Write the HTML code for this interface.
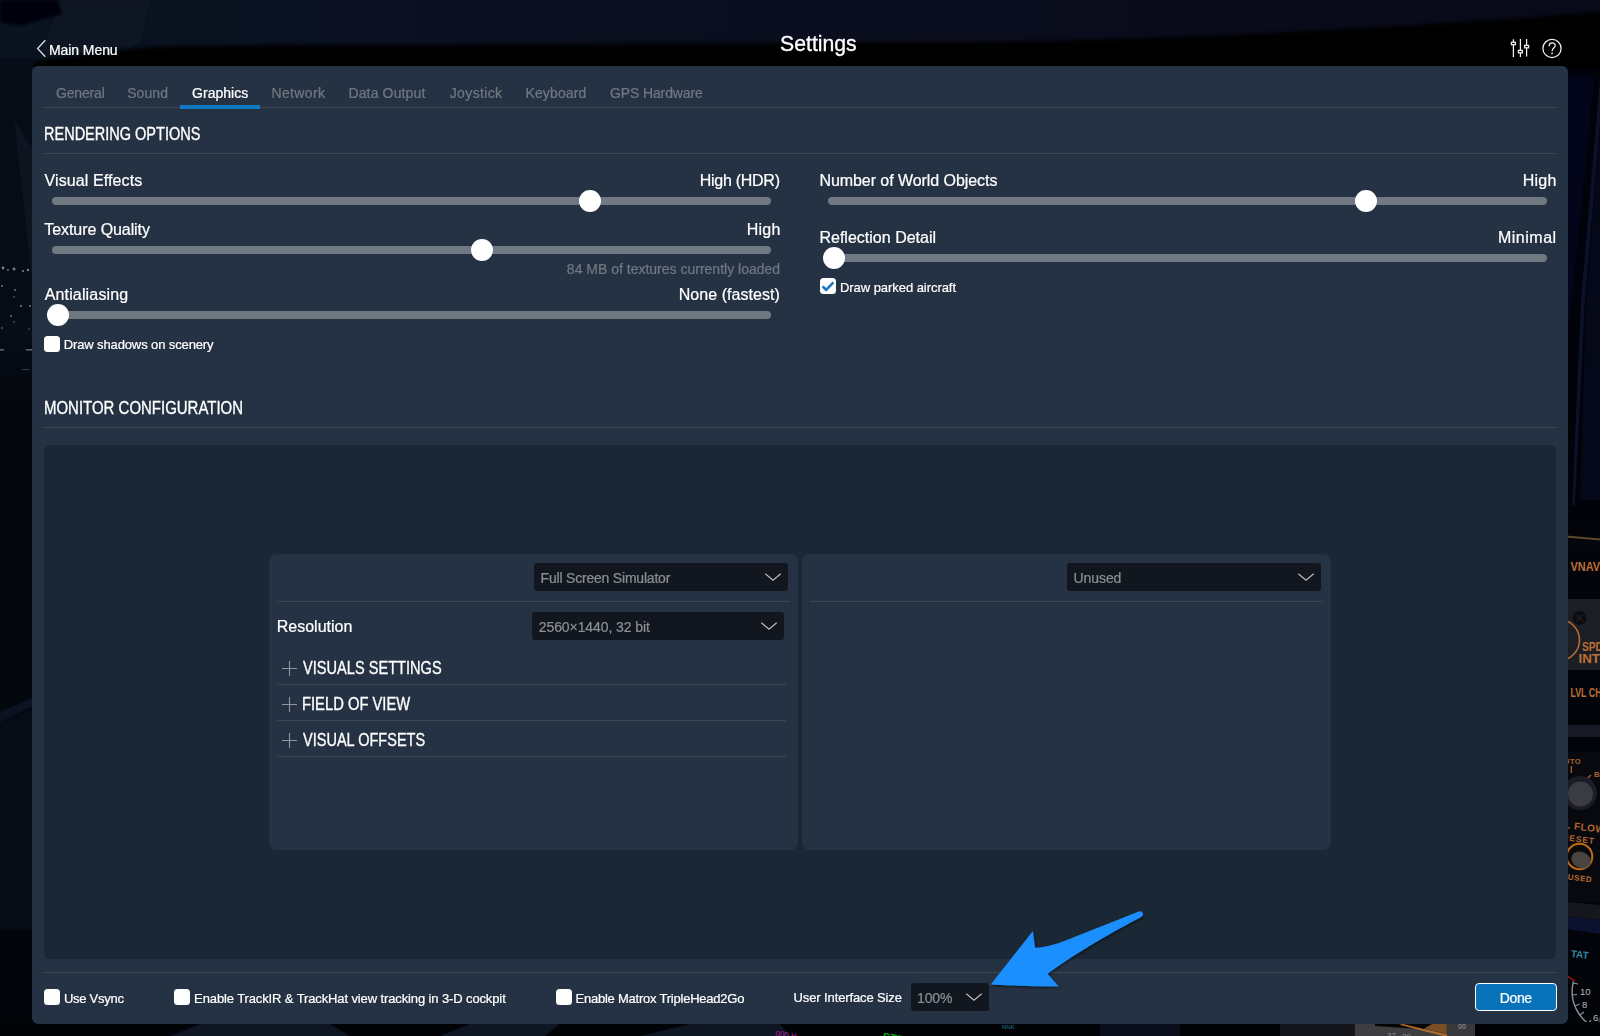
<!DOCTYPE html>
<html>
<head>
<meta charset="utf-8">
<title>Settings</title>
<style>
html,body{margin:0;padding:0;}
body{width:1600px;height:1036px;overflow:hidden;background:#03060d;font-family:"Liberation Sans",sans-serif;color:#fff;position:relative;}
.abs{position:absolute;}
.t{position:absolute;white-space:nowrap;line-height:1;-webkit-text-stroke:0.22px currentColor;}
.cond{transform-origin:0 0;-webkit-text-stroke:0.32px currentColor;}
#ui{position:absolute;left:0;top:0;width:1600px;height:1036px;will-change:transform;}
#bg{position:absolute;left:0;top:0;width:1600px;height:1036px;}
#panel{position:absolute;left:32px;top:66px;width:1536px;height:958px;background:#253243;border-radius:6px;}
.hl{position:absolute;height:1px;background:#3b4755;}
.tab{color:#707881;font-size:14px;}
.lbl{font-size:16px;color:#fff;}
.val{font-size:16px;color:#fff;text-align:right;}
.track{position:absolute;height:8px;border-radius:4px;background:#707881;}
.knob{position:absolute;width:22px;height:22px;border-radius:11px;background:#fff;}
.cb{position:absolute;width:16px;height:16px;border-radius:3.5px;background:#fff;}
.cbl{font-size:13px;color:#fff;}
.dd{position:absolute;background:#12161f;border-radius:3px;}
.ddt{font-size:14px;color:#8a8f96;}
.sec{font-size:17.5px;color:#fff;}
</style>
</head>
<body>
<svg id="bg" width="1600" height="1036" viewBox="0 0 1600 1036">
  <defs>
    <linearGradient id="lg-left" x1="0" y1="0" x2="0" y2="1">
      <stop offset="0" stop-color="#070d18"/><stop offset="0.3" stop-color="#060b15"/><stop offset="0.36" stop-color="#03060c"/><stop offset="1" stop-color="#04080f"/>
    </linearGradient>
    <linearGradient id="lg-right" x1="0" y1="0" x2="1" y2="0">
      <stop offset="0" stop-color="#04071a"/><stop offset="0.5" stop-color="#060a20"/><stop offset="1" stop-color="#02030c"/>
    </linearGradient>
    <linearGradient id="lg-top" x1="0" y1="0" x2="1" y2="0"><stop offset="0" stop-color="#0a1321"/><stop offset="0.3" stop-color="#0a1020"/><stop offset="0.65" stop-color="#090c1c"/><stop offset="1" stop-color="#080a19"/></linearGradient>
    <filter id="b3" x="-5%" y="-50%" width="110%" height="200%"><feGaussianBlur stdDeviation="2.2"/></filter>
    <filter id="b1"><feGaussianBlur stdDeviation="0.7"/></filter>
    <filter id="b2"><feGaussianBlur stdDeviation="1.6"/></filter>
  </defs>
  <rect x="0" y="0" width="1600" height="1036" fill="#03060d"/>
  <!-- top band: navy ceiling + black glareshield edge -->
  <rect x="0" y="0" width="1600" height="70" fill="url(#lg-top)"/>
  <path d="M60 0 L150 0 L140 42 L125 50 L40 58 Z" fill="#0b1422" filter="url(#b2)"/>
  <path d="M0 0 L58 0 L62 14 L20 26 L0 22 Z" fill="#020409" filter="url(#b2)"/>
  <path d="M-10 80 L-10 58 L30 62 L118 50 Q140 46 210 45.5 L1000 42 Q1320 35 1610 11 L1610 80 Z" fill="#000" filter="url(#b3)"/>
  <!-- left strip -->
  <rect x="0" y="58" width="34" height="978" fill="url(#lg-left)"/>
  <path d="M14 120 L34 150 L34 300 Z" fill="#0a1322" opacity="0.8" filter="url(#b1)"/>
  <g fill="#8d94a0" filter="url(#b1)" opacity="0.85">
    <circle cx="3" cy="268" r="1.4"/><circle cx="8" cy="270" r="0.9"/><circle cx="14" cy="269" r="1.5"/><circle cx="23" cy="271" r="1.1"/><circle cx="28" cy="270" r="1.2"/>
    <circle cx="2" cy="286" r="0.9"/><circle cx="15" cy="290" r="0.9"/><circle cx="14" cy="297" r="0.8"/><circle cx="21" cy="306" r="1"/><circle cx="30" cy="306" r="0.9"/>
    <circle cx="11" cy="316" r="0.9"/><circle cx="14" cy="322" r="0.8"/><circle cx="2" cy="328" r="1.2"/><circle cx="29" cy="329" r="1"/>
  </g>
  <rect x="0" y="324" width="32" height="20" fill="#0a111c" opacity="0.55"/>
  <g fill="#59606c" filter="url(#b1)"><rect x="0" y="349" width="4" height="1.6"/><rect x="26" y="349" width="6" height="1.6"/><rect x="22" y="369" width="8" height="1.2" opacity="0.5"/></g>
  <path d="M0 722 L34 708 L34 1036 L0 1036 Z" fill="#060b14"/>
  <path d="M0 712 L34 697 L34 705 L0 722 Z" fill="#0e1827" opacity="0.85" filter="url(#b1)"/>
  <rect x="0" y="930" width="34" height="106" fill="#020408" opacity="0.8"/>
  <!-- right strip: upper (window post) -->
  <rect x="1566" y="70" width="34" height="458" fill="#02030a"/>
  <path d="M1566 76 L1594.5 76 L1573 290 L1566 340 Z" fill="#03051b"/>
  <path d="M1600 76 L1604 76 L1585 300 L1575 505 L1572 505 L1581 300 Z" fill="#0a1430" opacity="0.75" filter="url(#b1)"/>
  <path d="M1602 100 L1602 500 L1580 500 L1586 300 Z" fill="#050819"/>
  <!-- right strip: cockpit panel -->
  <rect x="1566" y="520" width="34" height="516" fill="#030409"/>
  <path d="M1566 535.5 L1600 538.5 L1600 540.5 L1566 537.5 Z" fill="#5b4b2c"/>
  <rect x="1566" y="541" width="34" height="10" fill="#05070f"/>
  <rect x="1566" y="599" width="34" height="71" fill="#1c1e25"/>
  <rect x="1566" y="725" width="34" height="12" fill="#171924"/>
  <rect x="1566" y="752" width="34" height="150" fill="#07090f"/>
  <path d="M1566 902 L1600 905 L1600 920 L1566 916 Z" fill="#15171d"/>
  <path d="M1566 916 L1600 920 L1600 934 L1566 929 Z" fill="#0a1230"/>
  <g font-family="Liberation Sans, sans-serif" font-weight="bold" fill="#bf6f35">
    <text x="1570.5" y="571" font-size="12" textLength="29.5" lengthAdjust="spacingAndGlyphs">VNAV</text>
    <text x="1582" y="650.5" font-size="12" textLength="21" lengthAdjust="spacingAndGlyphs">SPD</text>
    <text x="1578.5" y="663" font-size="12" textLength="21.5" lengthAdjust="spacingAndGlyphs">INT</text>
    <text x="1570.5" y="696.5" font-size="13" textLength="31" lengthAdjust="spacingAndGlyphs">LVL CH</text>
    <text x="1564" y="763.5" font-size="7.5" letter-spacing="0.5" fill="#a8612f">UTO</text>
    <text x="1594" y="777" font-size="8" fill="#a8612f">B</text>
    <text x="1567.5" y="828.5" font-size="10" letter-spacing="0.4" transform="rotate(7 1567 829)" fill="#b4662f">. FLOW</text>
    <text x="1562" y="840" font-size="8.5" letter-spacing="0.9" transform="rotate(7 1562 840)" fill="#b4662f">RESET</text>
    <text x="1567.5" y="879.5" font-size="8" letter-spacing="0.6" transform="rotate(7 1567 879)" fill="#b4662f">USED</text>
  </g>
  <circle cx="1579.5" cy="618" r="7" fill="#0b0c10"/>
  <path d="M1575.5 614.5 L1583.5 621.5 M1583 614.5 L1576 621.5" stroke="#1c1d22" stroke-width="1.4"/>
  <circle cx="1559" cy="640" r="20.5" fill="none" stroke="#b86a33" stroke-width="1.6"/>
  <path d="M1571.3 766 V773 M1586.8 779 L1591 775" stroke="#a8612f" stroke-width="1.3"/>
  <circle cx="1580" cy="793" r="17" fill="#1b1d25" filter="url(#b1)"/>
  <circle cx="1580.5" cy="794" r="12.5" fill="#3b3b44" filter="url(#b1)"/>
  <circle cx="1579.5" cy="856.5" r="12.8" fill="#08090c" stroke="#c06c12" stroke-width="2"/>
  <ellipse cx="1581" cy="860" rx="10" ry="8" fill="#4a4540" filter="url(#b1)" transform="rotate(25 1581 860)"/>
  <text x="1570.5" y="957" font-family="Liberation Sans, sans-serif" font-weight="bold" font-size="10" fill="#2a879d" transform="rotate(6 1570 957)">TAT</text>
  <path d="M1566 975.5 L1575 981" stroke="#c01818" stroke-width="1.3"/>
  <path d="M1573.4 981.5 A40 40 0 0 0 1597 1028.5" fill="none" stroke="#8e9096" stroke-width="1.4"/>
  <path d="M1573 983 L1578 984 M1572 995 L1577 994.5 M1575 1006 L1579.5 1004 M1580 1015 L1584 1012 M1588 1024 L1591 1020" stroke="#8e9096" stroke-width="1.2"/>
  <g font-family="Liberation Sans, sans-serif" font-size="9.5" fill="#b6b8bc"><text x="1580" y="995">10</text><text x="1582" y="1008">8</text><text x="1593" y="1021">6</text></g>
  <path d="M1593 1036 L1600 1016 L1600 1036 Z" fill="#3a3a40"/>
  <!-- bottom strip -->
  <rect x="0" y="1022" width="1600" height="14" fill="#020307"/>
  <path d="M170 1036 L200 1024 L330 1024 L350 1036 Z" fill="#0b1220" filter="url(#b1)"/>
  <path d="M440 1036 L470 1024 L560 1024 L545 1036 Z" fill="#0b1220" filter="url(#b1)"/>
  <path d="M640 1036 L690 1024 L780 1024 L790 1036 Z" fill="#0d1422" filter="url(#b1)"/>
  <rect x="1100" y="1024" width="80" height="12" fill="#0a0d1a"/>
  <rect x="1280" y="1024" width="90" height="12" fill="#15161b"/>
  <rect x="1355" y="1024" width="92" height="12" fill="#3e3e40"/>
  <path d="M1375 1024 L1437 1024 L1437 1029.5 L1420 1029 L1375 1026 Z" fill="#050506"/>
  <path d="M1432 1024 L1446.5 1024 L1446.5 1033.8 L1424 1028.4 Z" fill="#7a4e22"/>
  <path d="M1403 1024 L1447 1034.4 L1447 1036 L1443 1036 L1399 1024.8 Z" fill="#b06a28"/>
  <rect x="1447" y="1024" width="28" height="12" fill="#38383a"/>
  <g font-family="Liberation Sans, sans-serif" font-size="8" fill="#8a8a8c"><text x="1387" y="1038">37</text><text x="1402" y="1039">29</text><text x="1458" y="1029" fill="#a0a0a4" font-size="7">00</text></g>
  <text x="775" y="1036" font-family="Liberation Sans, sans-serif" font-size="8" fill="#b020a0" transform="rotate(8 775 1036)">000 H</text>
  <text x="882" y="1040" font-family="Liberation Sans, sans-serif" font-weight="bold" font-size="11" fill="#18a018" transform="rotate(10 882 1040)">STP</text>
  <text x="1002" y="1029" font-family="Liberation Sans, sans-serif" font-size="6" fill="#2a7a9a">NNK</text>
</svg>

<div id="ui">
<div id="panel"></div>

<!-- header -->
<svg class="abs" style="left:30px;top:36px" width="20" height="26" viewBox="0 0 20 26"><path d="M15.3 4.2 L7.6 12.5 L15.3 20.8" fill="none" stroke="#e4e4e4" stroke-width="1.25"/></svg>
<div class="t" id="mainmenu" style="left:48.95px;letter-spacing:-0.07px;top:42.5px;font-size:14px;">Main Menu</div>
<div class="t cond" id="title" style="left:780.3px;transform:scaleX(0.94);top:33px;font-size:22.6px;">Settings</div>


<!-- header icons -->
<svg class="abs" id="ic-sliders" style="left:1506px;top:34px" width="28" height="28" viewBox="1506 34 28 28">
  <g fill="none" stroke="#f2f2f2" stroke-width="1.25">
    <path d="M1513.4 39.2 V56.9 M1520.4 39 V56.9 M1526.6 39 V56.6"/>
    <rect x="1511.4" y="42.3" width="4" height="2.4" fill="#000"/>
    <rect x="1518.4" y="50.4" width="4" height="2.4" fill="#000"/>
    <rect x="1524.6" y="45.4" width="4" height="2.4" fill="#000"/>
  </g>
</svg>
<svg class="abs" id="ic-help" style="left:1538px;top:34px" width="28" height="28" viewBox="1538 34 28 28">
  <circle cx="1552" cy="48.4" r="9.1" fill="none" stroke="#f2f2f2" stroke-width="1.25"/>
  <path d="M1549.1 46.2 C1549.1 41.8 1555.2 41.9 1555.2 45.6 C1555.2 48 1552.1 48.2 1552.1 51.2" fill="none" stroke="#f2f2f2" stroke-width="1.25"/>
  <circle cx="1552.1" cy="53.4" r="0.85" fill="#f2f2f2"/>
</svg>

<!-- tabs -->
<div class="t tab" id="tab0" style="left:55.98px;letter-spacing:-0.165px;top:86px;">General</div>
<div class="t tab" id="tab1" style="left:127.13px;letter-spacing:0.087px;top:86px;">Sound</div>
<div class="t tab" id="tab2" style="left:192.07px;letter-spacing:0.030px;top:86px;color:#fff;">Graphics</div>
<div class="t tab" id="tab3" style="left:271.41px;letter-spacing:0.379px;top:86px;">Network</div>
<div class="t tab" id="tab4" style="left:348.41px;letter-spacing:0.146px;top:86px;">Data Output</div>
<div class="t tab" id="tab5" style="left:449.77px;letter-spacing:0.359px;top:86px;">Joystick</div>
<div class="t tab" id="tab6" style="left:525.41px;letter-spacing:0.143px;top:86px;">Keyboard</div>
<div class="t tab" id="tab7" style="left:609.98px;letter-spacing:-0.119px;top:86px;">GPS Hardware</div>
<div class="hl" style="left:44px;top:107px;width:1512px;"></div>
<div class="abs" style="left:180px;top:105px;width:80px;height:4px;background:#1078c0;"></div>

<!-- RENDERING OPTIONS -->
<div class="t sec cond" id="h-render" style="left:44.2px;transform:scaleX(0.8290);top:126px;">RENDERING OPTIONS</div>
<div class="hl" style="left:44px;top:153px;width:1512px;"></div>

<div class="t lbl" id="l-ve" style="left:44.56px;letter-spacing:0.100px;top:173px;">Visual Effects</div>
<div class="t val" id="v-ve" style="left:699.75px;letter-spacing:-0.272px;top:173px;">High (HDR)</div>
<div class="track" style="left:52px;top:197px;width:719px;"></div>
<div class="knob" style="left:579px;top:190px;"></div>

<div class="t lbl" id="l-tq" style="left:44.35px;letter-spacing:-0.079px;top:222px;">Texture Quality</div>
<div class="t val" id="v-tq" style="left:746.64px;letter-spacing:0.277px;top:222px;">High</div>
<div class="track" style="left:52px;top:246px;width:719px;"></div>
<div class="knob" style="left:471px;top:239px;"></div>
<div class="t" id="v-mb" style="left:566.85px;top:262px;font-size:14px;color:#707881;">84 MB of textures currently loaded</div>

<div class="t lbl" id="l-aa" style="left:44.65px;letter-spacing:0.158px;top:287px;">Antialiasing</div>
<div class="t val" id="v-aa" style="left:678.64px;letter-spacing:0.064px;top:287px;">None (fastest)</div>
<div class="track" style="left:52px;top:311px;width:719px;"></div>
<div class="knob" style="left:47px;top:304px;"></div>

<div class="cb" style="left:44px;top:335.5px;"></div>
<div class="t cbl" id="c-sh" style="left:63.67px;letter-spacing:-0.115px;top:338px;">Draw shadows on scenery</div>

<div class="t lbl" id="l-wo" style="left:819.43px;letter-spacing:-0.059px;top:173px;">Number of World Objects</div>
<div class="t val" id="v-wo" style="left:1522.64px;letter-spacing:0.277px;top:173px;">High</div>
<div class="track" style="left:828px;top:197px;width:719px;"></div>
<div class="knob" style="left:1354.5px;top:190px;"></div>

<div class="t lbl" id="l-rd" style="left:819.43px;letter-spacing:0.011px;top:230px;">Reflection Detail</div>
<div class="t val" id="v-rd" style="left:1497.88px;letter-spacing:0.519px;top:230px;">Minimal</div>
<div class="track" style="left:828px;top:254px;width:719px;"></div>
<div class="knob" style="left:823px;top:247px;"></div>

<div class="cb" style="left:820px;top:278px;"></div>
<svg class="abs" style="left:820px;top:278px" width="16" height="16" viewBox="0 0 16 16"><path d="M2.6 8.4 L6.1 11.8 L13.4 4.4" fill="none" stroke="#1a78c2" stroke-width="2.6"/></svg>
<div class="t cbl" id="c-pa" style="left:839.98px;letter-spacing:-0.053px;top:280.5px;">Draw parked aircraft</div>

<!-- MONITOR CONFIGURATION -->
<div class="t sec cond" id="h-mon" style="left:43.96px;transform:scaleX(0.8554);top:400px;">MONITOR CONFIGURATION</div>
<div class="hl" style="left:44px;top:427px;width:1512px;"></div>
<div class="abs" id="monarea" style="left:44px;top:445px;width:1512px;height:514px;background:#1a2734;border-radius:6px;"></div>
<div class="abs" id="card1" style="left:269px;top:554px;width:529px;height:296px;background:#253243;border-radius:7.5px;"></div>
<div class="abs" id="card2" style="left:802px;top:554px;width:529px;height:296px;background:#253243;border-radius:7.5px;"></div>

<!-- card1 -->
<div class="dd" style="left:534px;top:563px;width:254px;height:28px;"></div>
<div class="t ddt" id="d-fs" style="left:540.56px;letter-spacing:-0.201px;top:571px;">Full Screen Simulator</div>
<svg class="abs" style="left:763px;top:570px" width="20" height="14" viewBox="0 0 20 14"><path d="M2.3 3.7 L10 10.3 L17.7 3.7" fill="none" stroke="#bcc0c6" stroke-width="1.15"/></svg>
<div class="hl" style="left:277px;top:601px;width:513px;"></div>
<div class="t lbl" id="l-res" style="left:276.75px;top:619px;">Resolution</div>
<div class="dd" style="left:532px;top:612px;width:252px;height:28px;"></div>
<div class="t ddt" id="d-res" style="left:538.76px;letter-spacing:-0.084px;top:620px;">2560×1440, 32 bit</div>
<svg class="abs" style="left:759px;top:619px" width="20" height="14" viewBox="0 0 20 14"><path d="M2.3 3.7 L10 10.3 L17.7 3.7" fill="none" stroke="#bcc0c6" stroke-width="1.15"/></svg>

<svg class="abs" style="left:281px;top:660px" width="17" height="17" viewBox="0 0 17 17"><path d="M8.5 1 V16 M1 8.5 H16" fill="none" stroke="#8f969e" stroke-width="1.1"/></svg>
<div class="t sec cond" id="s-vs" style="left:303.00px;transform:scaleX(0.8340);top:660px;">VISUALS SETTINGS</div>
<div class="hl" style="left:277px;top:684px;width:509px;"></div>
<svg class="abs" style="left:281px;top:696px" width="17" height="17" viewBox="0 0 17 17"><path d="M8.5 1 V16 M1 8.5 H16" fill="none" stroke="#8f969e" stroke-width="1.1"/></svg>
<div class="t sec cond" id="s-fov" style="left:301.74px;transform:scaleX(0.8431);top:696px;">FIELD OF VIEW</div>
<div class="hl" style="left:277px;top:720px;width:509px;"></div>
<svg class="abs" style="left:281px;top:732px" width="17" height="17" viewBox="0 0 17 17"><path d="M8.5 1 V16 M1 8.5 H16" fill="none" stroke="#8f969e" stroke-width="1.1"/></svg>
<div class="t sec cond" id="s-vo" style="left:303.00px;transform:scaleX(0.8299);top:732px;">VISUAL OFFSETS</div>
<div class="hl" style="left:277px;top:756px;width:509px;"></div>

<!-- card2 -->
<div class="dd" style="left:1067px;top:563px;width:254px;height:28px;"></div>
<div class="t ddt" id="d-un" style="left:1073.62px;letter-spacing:-0.103px;top:571px;">Unused</div>
<svg class="abs" style="left:1296px;top:570px" width="20" height="14" viewBox="0 0 20 14"><path d="M2.3 3.7 L10 10.3 L17.7 3.7" fill="none" stroke="#bcc0c6" stroke-width="1.15"/></svg>
<div class="hl" style="left:810px;top:601px;width:513px;"></div>

<!-- bottom bar -->
<div class="hl" style="left:44px;top:972px;width:1512px;"></div>
<div class="cb" style="left:44px;top:989px;"></div>
<div class="t cbl" id="c-vs" style="left:63.90px;letter-spacing:-0.263px;top:991.5px;">Use Vsync</div>
<div class="cb" style="left:174px;top:989px;"></div>
<div class="t cbl" id="c-tr" style="left:194.11px;letter-spacing:-0.118px;top:991.5px;">Enable TrackIR &amp; TrackHat view tracking in 3-D cockpit</div>
<div class="cb" style="left:556px;top:989px;"></div>
<div class="t cbl" id="c-mx" style="left:575.50px;letter-spacing:-0.228px;top:991.5px;">Enable Matrox TripleHead2Go</div>
<div class="t cbl" id="c-ui" style="margin-top:-1px;left:793.58px;letter-spacing:-0.120px;top:991.5px;">User Interface Size</div>
<div class="dd" style="left:911px;top:983px;width:78px;height:27.5px;"></div>
<div class="t ddt" id="d-pc" style="left:917.01px;letter-spacing:-0.108px;top:991px;">100%</div>
<svg class="abs" style="left:964px;top:990px" width="20" height="14" viewBox="0 0 20 14"><path d="M2.3 3.7 L10 10.3 L17.7 3.7" fill="none" stroke="#bcc0c6" stroke-width="1.15"/></svg>
<div class="abs" id="done" style="left:1475px;top:983px;width:82px;height:28px;box-sizing:border-box;border:1.5px solid #fff;border-radius:4px;background:#0873b9;"></div>
<div class="t" id="t-done" style="left:1499.84px;letter-spacing:-0.383px;top:990.5px;font-size:14px;">Done</div>

<!-- annotation arrow -->
<svg class="abs" id="arrow" style="left:980px;top:900px" width="180" height="100" viewBox="980 900 180 100">
  <defs><filter id="ash" x="-10%" y="-10%" width="120%" height="130%"><feDropShadow dx="0.8" dy="1.4" stdDeviation="0.9" flood-color="#000" flood-opacity="0.55"/></filter></defs>
  <path filter="url(#ash)" fill="#1b8ffe" d="M990.7 984.4 L1032.9 930.9 L1035.1 947.8 C1047 947.6 1060 943 1075 936.8 L1138.8 911.6 A2.9 2.9 0 0 1 1141.2 917.0 Q1085 946.5 1047.5 973.7 L1058.7 986.6 Q1025 986.4 990.7 984.4 Z"/>
</svg>

</div>
</body>
</html>
